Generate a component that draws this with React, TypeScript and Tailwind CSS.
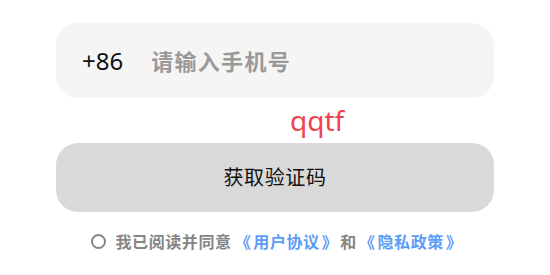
export default function App() {
  return (
    <div
      className="w-[550px] h-[275px] bg-white px-[56px] pt-[23px]"
      style={{ fontFamily: '"Noto Sans", "Noto Sans CJK SC", sans-serif' }}
    >
      {/* phone input */}
      <div className="h-[75px] rounded-[22px] bg-[#f5f5f5] flex items-center pl-[26px]">
        <span className="text-[24px] text-[#111] leading-none">+86</span>
        <span className="ml-[28px] text-[22px] tracking-[1.3px] font-semibold text-[#999] leading-none">
          请输入手机号
        </span>
      </div>

      {/* code text */}
      <div className="h-[45px] flex items-center pl-[234px]">
        <span className="text-[28px] leading-none text-[#ef4450] -mt-[2px]">qqtf</span>
      </div>

      {/* button */}
      <button className="w-full h-[69px] rounded-[22px] bg-[#d9d9d9] flex items-center justify-center text-[20px] tracking-[0.6px] text-[#111]">
        获取验证码
      </button>

      {/* agreement */}
      <div
        className="mt-[21px] flex items-center justify-center text-[16px] tracking-[0.6px] font-bold leading-none pl-[4px]"
        style={{ fontFamily: '"Noto Sans CJK SC", sans-serif' }}
      >
        <span className="w-[15px] h-[15px] rounded-full border-2 border-[#858585] mr-[9px]" />
        <span className="text-[#858585]">我已阅读并同意</span>
        <span className="text-[#5b9cf5] ml-[3px] flex">
          <span className="mr-[2px]">《</span>用户协议<span className="ml-[2px]">》</span>
        </span>
        <span className="text-[#858585] ml-[2px] mr-[2px]">和</span>
        <span className="text-[#5b9cf5] flex">
          <span className="mr-[2px]">《</span>隐私政策<span className="ml-[2px]">》</span>
        </span>
      </div>
    </div>
  );
}
